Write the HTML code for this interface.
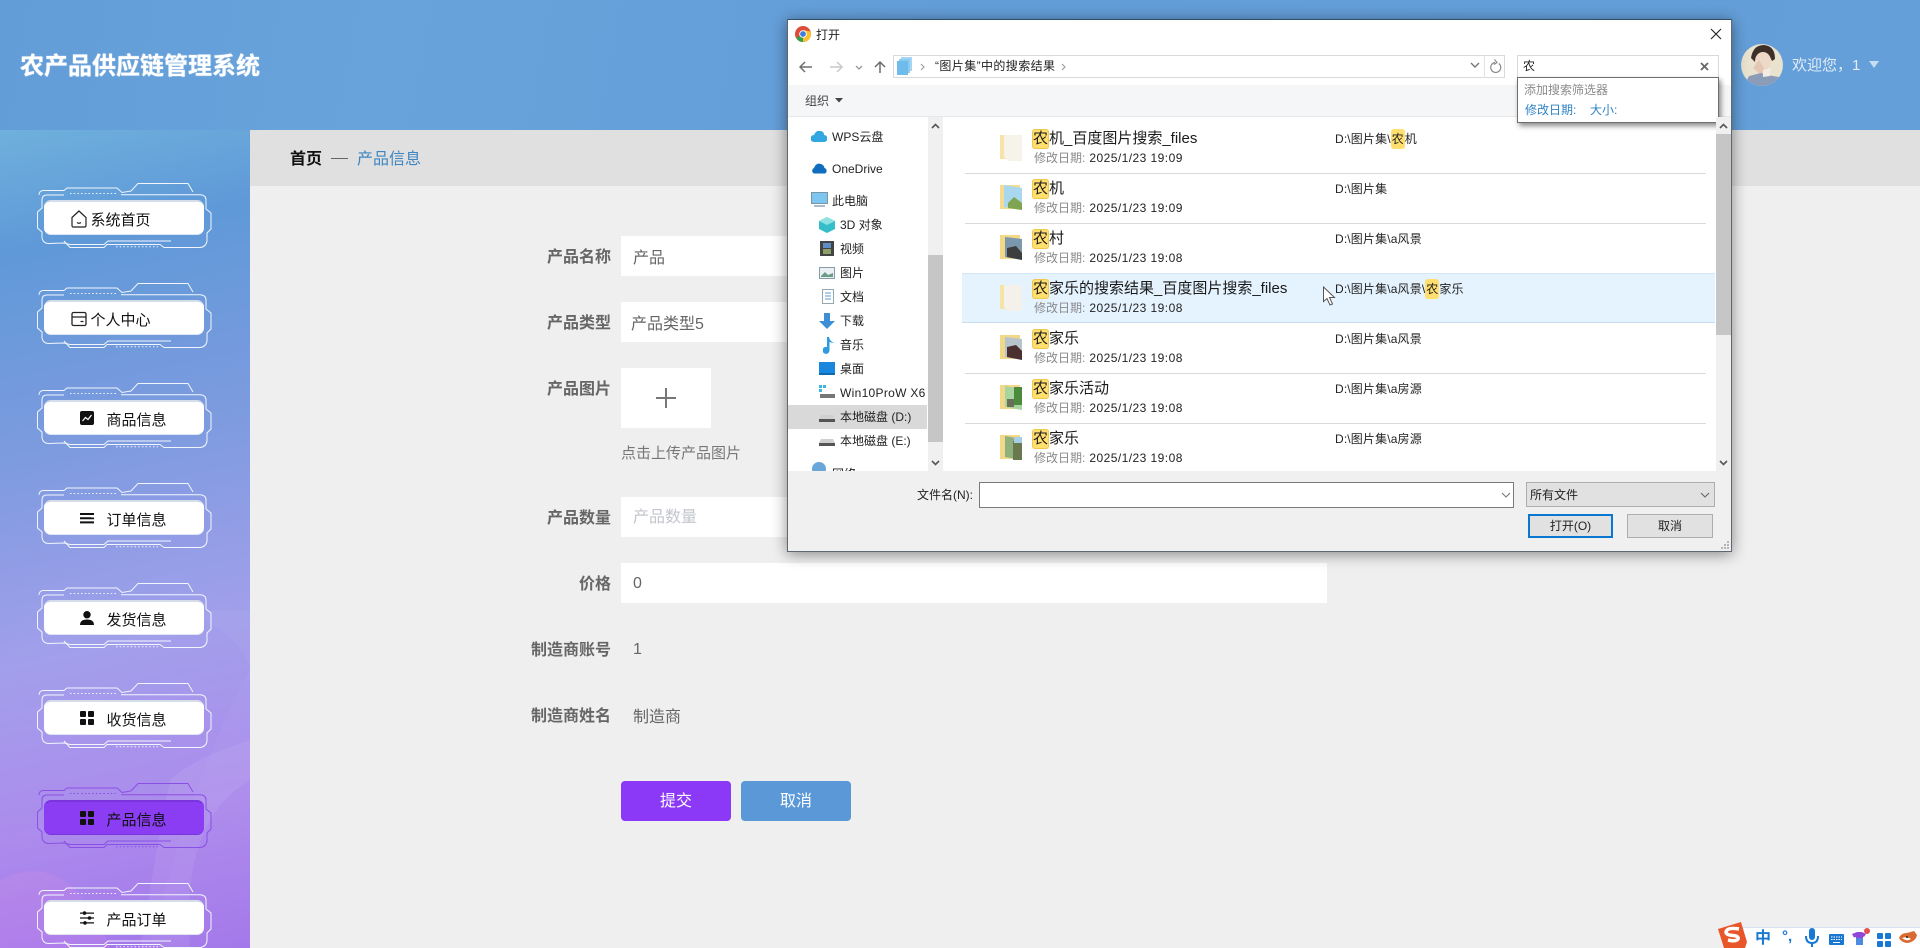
<!DOCTYPE html>
<html lang="zh"><head><meta charset="utf-8"><title>农产品供应链管理系统</title>
<style>
html{margin:0;padding:0;width:1920px;height:948px;overflow:hidden}
body{margin:0;padding:0;position:relative;width:1920px;height:948px;overflow:hidden;background:#efefef;font-family:"Liberation Sans","Noto Sans CJK SC",sans-serif;color:#333}
div,span.a,svg.a{position:absolute}
.t{position:absolute;white-space:nowrap;line-height:20px;height:20px}
.side{left:0;top:130px;width:250px;height:818px;overflow:hidden;background:linear-gradient(168deg,#6fb0dc 0,#5f99d8 14%,#7d9bdf 38%,#a29feb 62%,#ac8bec 82%,#a274ea 100%)}
.btn{left:44px;width:160px;height:35px;background:#fff;border-radius:7px;box-sizing:border-box;border-top:2px solid #d5dcea;border-bottom:1px solid #dfe6f3}
.btn.on{background:#8a3df2;border-color:#7b33dc}
.m{font-size:15px;color:#111;margin-top:2px}
.lb{font-size:16px;font-weight:bold;color:#666;text-align:right;width:120px;left:491px;margin-top:2px}
.in{left:621px;width:706px;height:40px;background:#fff}
.v{font-size:16px;color:#666;margin-top:2px}
.dlg{left:787px;top:19px;width:945px;height:533px;background:#fff;box-sizing:border-box;border:1px solid #5f6870;border-top-color:#2d5068;box-shadow:0 2px 14px rgba(0,0,0,.45)}
.d{font-size:12px;color:#222}
.n{font-size:15px;color:#1a1a1a;left:1032px;margin-top:1px}
.h{display:inline-block;width:17px;text-align:center;background:#ffdf6d;border-radius:3px;box-shadow:inset 0 0 0 1px #f0c850}
.hs{display:inline-block;width:14px;text-align:center;background:#ffdf6d;border-radius:3px}
.dt{font-size:12px;left:1034px;color:#8a8a8a}
.dt b{font-weight:normal;color:#222;letter-spacing:.45px;margin-left:4px}
.p{font-size:12px;left:1335px;color:#222;letter-spacing:.15px}
.sep{left:965px;width:741px;height:1px;background:#d9d9d9}
.f{left:1000px;width:22px;height:28px}
</style></head><body>
<svg width="0" height="0" style="position:absolute">
<defs>
<symbol id="fr" viewBox="0 0 210 100">
<g fill="none" stroke="currentColor" stroke-width="1">
<path d="M19 25Q19 21 23 20.5L44 20.5L47 18L97 18L102 22.5L111 21L118 13.5L168 13.5L173 22"/>
<path d="M44 25L27 25Q22 25 22 30L22 38L17.5 42L17.5 58L22 62L22 68Q23 73 28 73.5L44 73L50 74.5L84 74.5L88 71L151 71"/>
<path d="M44 71L50 77.5L84 77.5L87 74.5L140 74.5L144 77.5L180 77.5Q186 77 187 71L187 63L191 59L191 43L186 39L186 30Q186 25 180 24.7L101 24.7"/>
<path d="M50 23.5L96 23.5" stroke-dasharray="1.5 2.2"/>
<path d="M96 76.7L138 76.7" stroke-dasharray="1.5 2.2"/>
</g>
</symbol>
<symbol id="grid" viewBox="0 0 14 14"><rect width="6" height="6" rx="1"/><rect x="8" width="6" height="6" rx="1"/><rect y="8" width="6" height="6" rx="1"/><rect x="8" y="8" width="6" height="6" rx="1"/></symbol>
</defs></svg>

<!-- header -->
<div style="left:0;top:0;width:1920px;height:130px;background:linear-gradient(100deg,#639dd8,#68a3db 20%,#639dd8 50%,#649fd9)"></div>
<div class="t" style="left:20px;top:55px;height:24px;line-height:24px;font-size:24px;font-weight:bold;color:#fff;text-shadow:0 0 1px #fff">农产品供应链管理系统</div>
<svg class="a" style="left:1741px;top:44px" width="42" height="42" viewBox="0 0 42 42"><defs><clipPath id="av"><circle cx="21" cy="21" r="21"/></clipPath></defs><g clip-path="url(#av)"><rect width="42" height="42" fill="#e9e2cf"/><path d="M10 14Q12 1 23 1Q34 2 34 15L31 17Q27 8 20 9Q15 10 14 18Z" fill="#3d3029"/><ellipse cx="22" cy="17" rx="8" ry="9" fill="#eed9c8"/><path d="M12 24L18 16L24 26L20 31Z" fill="#e3c7b2"/><path d="M3 42L8 32L20 29L26 31L38 33L40 42Z" fill="#8b9cb8"/><path d="M22 26L30 24L29 32L22 33Z" fill="#f3ece2"/></g></svg>
<div class="t" style="left:1792px;top:56px;font-size:15px;color:#e1ecf7">欢迎您，1</div>
<svg class="a" style="left:1869px;top:61px" width="10" height="8"><path d="M0 0H10L5 7Z" fill="#c9ddf2"/></svg>

<!-- sidebar -->
<div class="side">
<svg class="a" style="left:0;top:480px" width="250" height="338" viewBox="0 0 250 338"><path d="M250 60Q190 170 150 338H250Z" fill="#fff" opacity=".03"/><path d="M0 270Q70 235 110 338H0Z" fill="#e58fe8" opacity=".18"/><path d="M140 338Q160 220 170 170Q190 150 250 130V170Q180 210 190 338Z" fill="#fff" opacity=".07"/><path d="M180 0Q240 20 250 60V0Z" fill="#fff" opacity=".04"/></svg>
</div>
<svg class="a" style="left:20px;top:170px;color:#f1f6fd" width="210" height="100"><use href="#fr"/></svg>
<svg class="a" style="left:20px;top:270px;color:#f1f6fd" width="210" height="100"><use href="#fr"/></svg>
<svg class="a" style="left:20px;top:370px;color:#f1f6fd" width="210" height="100"><use href="#fr"/></svg>
<svg class="a" style="left:20px;top:470px;color:#f1f6fd" width="210" height="100"><use href="#fr"/></svg>
<svg class="a" style="left:20px;top:570px;color:#f1f6fd" width="210" height="100"><use href="#fr"/></svg>
<svg class="a" style="left:20px;top:670px;color:#f1f6fd" width="210" height="100"><use href="#fr"/></svg>
<svg class="a" style="left:20px;top:770px;color:#8a4fe4" width="210" height="100"><use href="#fr"/></svg>
<svg class="a" style="left:20px;top:870px;color:#f1f6fd" width="210" height="78"><use href="#fr" width="210" height="100"/></svg>
<div class="btn" style="top:200px"></div>
<div class="btn" style="top:300px"></div>
<div class="btn" style="top:400px"></div>
<div class="btn" style="top:500px"></div>
<div class="btn" style="top:600px"></div>
<div class="btn" style="top:700px"></div>
<div class="btn on" style="top:800px"></div>
<div class="btn" style="top:900px"></div>
<svg class="a" style="left:71px;top:210px" width="16" height="18" viewBox="0 0 16 18" fill="none" stroke="#222" stroke-width="1.2"><path d="M1 7.5L8 1L15 7.5V15.5Q15 17 13.5 17H2.5Q1 17 1 15.5Z"/><path d="M6 12.5Q8 14 10 12.5"/></svg>
<div class="t m" style="left:90.5px;top:209px">系统首页</div>
<svg class="a" style="left:71px;top:311px" width="16" height="16" viewBox="0 0 16 16" fill="none" stroke="#222" stroke-width="1.3"><rect x="1" y="1.5" width="14" height="13" rx="1.5"/><path d="M1 6H15M9.5 10.5H12.5"/></svg>
<div class="t m" style="left:90.5px;top:309px">个人中心</div>
<svg class="a" style="left:80px;top:411px" width="14" height="14" viewBox="0 0 14 14"><rect width="14" height="14" rx="2" fill="#111"/><path d="M2.5 10L5.5 6.5L8 8.5L11.5 4" fill="none" stroke="#fff" stroke-width="1.2"/></svg>
<div class="t m" style="left:106.5px;top:409px">商品信息</div>
<svg class="a" style="left:80px;top:511px" width="14" height="14" viewBox="0 0 14 14"><path d="M0 2H14V4H0ZM0 6.2H14V8.2H0ZM0 10.4H14V12.4H0Z" fill="#111"/><path d="M11 5H14V6.5H11Z" fill="#fff"/></svg>
<div class="t m" style="left:106.5px;top:509px">订单信息</div>
<svg class="a" style="left:80px;top:611px" width="14" height="14" viewBox="0 0 14 14" fill="#111"><circle cx="7" cy="3.7" r="3.7"/><path d="M0 14Q0 8.5 7 8.5Q14 8.5 14 14Z"/></svg>
<div class="t m" style="left:106.5px;top:609px">发货信息</div>
<svg class="a" style="left:80px;top:711px" width="14" height="14" fill="#111"><use href="#grid"/></svg>
<div class="t m" style="left:106.5px;top:709px">收货信息</div>
<svg class="a" style="left:80px;top:811px" width="14" height="14" fill="#111"><use href="#grid"/></svg>
<div class="t m" style="left:106.5px;top:809px">产品信息</div>
<svg class="a" style="left:80px;top:911px" width="14" height="14" viewBox="0 0 14 14" fill="#111"><path d="M0 1.5H14V2.7H0ZM0 6.4H14V7.6H0ZM0 11.3H14V12.5H0Z"/><circle cx="4.5" cy="2.1" r="1.8"/><circle cx="9.5" cy="7" r="1.8"/><circle cx="5" cy="11.9" r="1.8"/></svg>
<div class="t m" style="left:106.5px;top:909px">产品订单</div>

<!-- breadcrumb -->
<div style="left:250px;top:130px;width:1670px;height:56px;background:#e0e0e0"></div>
<div class="t" style="left:290px;top:150px;font-size:16px;font-weight:bold;color:#111">首页</div>
<div style="left:331px;top:158px;width:17px;height:1px;background:#666"></div>
<div class="t" style="left:357px;top:150px;font-size:16px;color:#3e86c2">产品信息</div>

<!-- form -->
<div class="t lb" style="top:246px">产品名称</div><div class="in" style="top:236px"></div>
<div class="t v" style="left:633px;top:247px">产品</div>
<div class="t lb" style="top:312px">产品类型</div><div class="in" style="top:302px"></div>
<div class="t v" style="left:631px;top:313px">产品类型5</div>
<div class="t lb" style="top:378px">产品图片</div>
<div style="left:621px;top:368px;width:90px;height:60px;background:#fff"></div>
<div style="left:656px;top:397px;width:20px;height:2px;background:#777"></div>
<div style="left:665px;top:388px;width:2px;height:20px;background:#777"></div>
<div class="t" style="left:621px;top:444px;font-size:15px;color:#777">点击上传产品图片</div>
<div class="t lb" style="top:507px">产品数量</div><div class="in" style="top:497px"></div>
<div class="t" style="left:633px;top:508px;font-size:16px;color:#c3c6cd">产品数量</div>
<div class="t lb" style="top:573px">价格</div><div class="in" style="top:563px"></div>
<div class="t v" style="left:633px;top:572px">0</div>
<div class="t lb" style="top:639px">制造商账号</div>
<div class="t v" style="left:633px;top:638px">1</div>
<div class="t lb" style="top:705px">制造商姓名</div>
<div class="t v" style="left:633px;top:706px">制造商</div>
<div class="t" style="left:621px;top:781px;width:110px;height:40px;line-height:42px;text-align:center;background:#8b39f7;border-radius:4px;color:#fff;font-size:16px">提交</div>
<div class="t" style="left:741px;top:781px;width:110px;height:40px;line-height:42px;text-align:center;background:#5a98d8;border-radius:4px;color:#fff;font-size:16px">取消</div>

<!-- dialog -->
<div class="dlg"></div>
<svg class="a" style="left:795px;top:26px" width="16" height="16" viewBox="0 0 16 16"><circle cx="8" cy="8" r="8" fill="#dd4b39"/><path d="M8 8L1.1 12A8 8 0 0 0 8 16L11.5 8Z" fill="#2fa04c"/><path d="M8 8L8 16A8 8 0 0 0 15.6 5.5L8 4Z" fill="#fbc02d"/><circle cx="8" cy="8" r="3.8" fill="#fff"/><circle cx="8" cy="8" r="2.9" fill="#3f7fdc"/></svg>
<div class="t d" style="left:816px;top:25px">打开</div>
<svg class="a" style="left:1710px;top:28px" width="12" height="12" viewBox="0 0 12 12"><path d="M1 1L11 11M11 1L1 11" stroke="#222" stroke-width="1.1" fill="none"/></svg>
<!-- toolbar -->
<svg class="a" style="left:799px;top:60px" width="95" height="14" viewBox="0 0 95 14" fill="none"><path d="M1 7H13M6 2L1 7L6 12" stroke="#6d6d6d" stroke-width="1.5"/><path d="M31 7H43M38 2L43 7L38 12" stroke="#c9c9c9" stroke-width="1.5"/><path d="M57 6L60 9L63 6" stroke="#999" stroke-width="1.3"/><path d="M81 13V2M76 7L81 2L86 7" stroke="#6d6d6d" stroke-width="1.5"/></svg>
<div style="left:893px;top:55px;width:612px;height:23px;box-sizing:border-box;border:1px solid #d9d9d9;background:#fff"></div>
<div style="left:1484px;top:55px;width:1px;height:23px;background:#e3e3e3"></div>
<svg class="a" style="left:897px;top:57px" width="15" height="18" viewBox="0 0 15 18"><rect x="4" y="0" width="11" height="14" fill="#a6d6f5"/><rect x="2" y="2" width="11" height="14" fill="#8ccaf0"/><rect x="0" y="4" width="11" height="14" fill="#6ebbec"/></svg>
<svg class="a" style="left:920px;top:62px" width="150" height="10" viewBox="0 0 150 10" fill="none" stroke="#999" stroke-width="1.1"><path d="M1 2L4 5L1 8M142 2L145 5L142 8"/></svg>
<div class="t d" style="left:935px;top:56px;letter-spacing:.4px">“图片集”中的搜索结果</div>
<svg class="a" style="left:1470px;top:62px" width="10" height="7"><path d="M1 1L5 5L9 1" fill="none" stroke="#777" stroke-width="1.4"/></svg>
<svg class="a" style="left:1489px;top:59px" width="13" height="15" viewBox="0 0 13 15" fill="none" stroke="#8a8a8a" stroke-width="1.2"><path d="M9.8 4.500A5 5 0 1 1 6 3.500M5.500 .5L8 3.500L5 5.500"/></svg>
<div style="left:1517px;top:55px;width:202px;height:23px;box-sizing:border-box;border:1px solid #d9d9d9;background:#fff"></div>
<div class="t d" style="left:1523px;top:56px">农</div>
<svg class="a" style="left:1700px;top:62px" width="9" height="9" viewBox="0 0 9 9"><path d="M1 1L8 8M8 1L1 8" stroke="#666" stroke-width="1.8"/></svg>
<div style="left:788px;top:85px;width:943px;height:32px;background:#f5f6f7"></div>
<div class="t d" style="left:805px;top:91px;color:#444">组织</div>
<svg class="a" style="left:835px;top:98px" width="8" height="5"><path d="M0 0H8L4 4.5Z" fill="#444"/></svg>
<div style="left:788px;top:116px;width:943px;height:1px;background:#e8e8e8"></div>

<!-- search dropdown -->
<div style="left:1517px;top:77px;width:202px;height:46px;box-sizing:border-box;border:1px solid #6e6e6e;background:#fff;box-shadow:2px 3px 5px rgba(0,0,0,.45)"></div>
<div class="t d" style="left:1524px;top:80px;color:#8a8a8a">添加搜索筛选器</div>
<div class="t d" style="left:1525px;top:100px;color:#2f83c5">修改日期:</div>
<div class="t d" style="left:1590px;top:100px;color:#2f83c5">大小:</div>

<!-- nav pane -->
<div style="left:788px;top:117px;width:155px;height:354px;background:#fff;overflow:hidden">
 <div style="left:0;top:288px;width:139px;height:24px;background:#d9d9d9"></div>
 <svg class="a" style="left:23px;top:12px" width="16" height="14" viewBox="0 0 16 14"><path d="M3 13A3.5 3.5 0 0 1 3 6Q5 1 9 2Q13 2 13 6A3.5 3.5 0 0 1 13 13Z" fill="#33a7e0"/></svg>
 <svg class="a" style="left:23px;top:45px" width="17" height="12" viewBox="0 0 17 12"><path d="M3 11.5A3 3 0 0 1 3 6Q5 .5 10 2Q13 3 13.500 6A3 3 0 0 1 14 11.500Z" fill="#0f6cbf"/></svg>
 <svg class="a" style="left:23px;top:75px" width="17" height="16" viewBox="0 0 17 16"><rect x=".5" y=".5" width="16" height="11" fill="#7dc6f0" stroke="#7b94a8"/><path d="M3 13H14V15H3Z" fill="#aebcc8"/></svg>
 <svg class="a" style="left:31px;top:100px" width="16" height="16" viewBox="0 0 16 16"><path d="M8 0L16 4V12L8 16L0 12V4Z" fill="#35bdc9"/><path d="M8 0L16 4L8 8L0 4Z" fill="#8fe2e2"/></svg>
 <svg class="a" style="left:32px;top:124px" width="14" height="15" viewBox="0 0 14 15"><rect width="14" height="15" fill="#444"/><rect x="3" y="2" width="8" height="5" fill="#5e8fc4"/><rect x="3" y="8" width="8" height="5" fill="#8da06a"/></svg>
 <svg class="a" style="left:31px;top:150px" width="16" height="12" viewBox="0 0 16 12"><rect x=".5" y=".5" width="15" height="11" fill="#e9eff3" stroke="#8a9ba8"/><path d="M2 9L6 5L9 8L14 6V10H2Z" fill="#6a9c86"/></svg>
 <svg class="a" style="left:34px;top:172px" width="12" height="15" viewBox="0 0 12 15"><rect x=".5" y=".5" width="11" height="14" fill="#fff" stroke="#9aa6ae"/><path d="M3 4H9M3 7H9M3 10H9" stroke="#5b9bd0"/></svg>
 <svg class="a" style="left:31px;top:196px" width="16" height="16" viewBox="0 0 16 16"><path d="M5 0H11V8H16L8 16L0 8H5Z" fill="#3f8fd6"/></svg>
 <svg class="a" style="left:35px;top:219px" width="12" height="18" viewBox="0 0 12 18"><path d="M4 1H6Q7 6 12 7Q9 7 6.500 6V14A3.500 3.500 0 1 1 4 11Z" fill="#2f9be0"/></svg>
 <div style="left:31px;top:245px;width:16px;height:11px;background:#1987dd;border-bottom:2px solid #0f6ab0"></div>
 <svg class="a" style="left:31px;top:268px" width="16" height="14" viewBox="0 0 16 14"><rect x="0" y="0" width="3" height="3" fill="#3fb6e0"/><rect x="4" y="0" width="3" height="3" fill="#3fb6e0"/><rect x="0" y="4" width="3" height="3" fill="#3fb6e0"/><path d="M1 9H16V13H1Z" fill="#777"/></svg>
 <svg class="a" style="left:31px;top:296px" width="16" height="10" viewBox="0 0 16 10"><path d="M2 2H14L16 6V9H0V6Z" fill="#d0d0d0"/><rect y="6" width="16" height="3" fill="#555"/></svg>
 <svg class="a" style="left:31px;top:320px" width="16" height="10" viewBox="0 0 16 10"><path d="M2 2H14L16 6V9H0V6Z" fill="#d0d0d0"/><rect y="6" width="16" height="3" fill="#555"/></svg>
 <svg class="a" style="left:24px;top:345px" width="14" height="14"><circle cx="7" cy="7" r="7" fill="#6aa7d8"/></svg>
 <div class="t d" style="left:44px;top:347px">网络</div>
 <div class="t d" style="left:44px;top:10px">WPS云盘</div>
 <div class="t d" style="left:44px;top:42px">OneDrive</div>
 <div class="t d" style="left:44px;top:74px">此电脑</div>
 <div class="t d" style="left:52px;top:98px">3D 对象</div>
 <div class="t d" style="left:52px;top:122px">视频</div>
 <div class="t d" style="left:52px;top:146px">图片</div>
 <div class="t d" style="left:52px;top:170px">文档</div>
 <div class="t d" style="left:52px;top:194px">下载</div>
 <div class="t d" style="left:52px;top:218px">音乐</div>
 <div class="t d" style="left:52px;top:242px">桌面</div>
 <div style="left:52px;top:266px;width:87px;height:20px;overflow:hidden"><div class="t d" style="left:0;top:0;letter-spacing:.3px">Win10ProW X6</div></div>
 <div class="t d" style="left:52px;top:290px">本地磁盘 (D:)</div>
 <div class="t d" style="left:52px;top:314px">本地磁盘 (E:)</div>
 <div style="left:140px;top:0;width:15px;height:354px;background:#f0f0f0"></div>
 <div style="left:140px;top:138px;width:15px;height:187px;background:#c6c6c6"></div>
 <svg class="a" style="left:143px;top:6px" width="9" height="6"><path d="M1 5L4.500 1.500L8 5" fill="none" stroke="#555" stroke-width="1.6"/></svg>
 <svg class="a" style="left:143px;top:343px" width="9" height="6"><path d="M1 1L4.500 4.500L8 1" fill="none" stroke="#555" stroke-width="1.6"/></svg>
</div>

<!-- file list -->
<div style="left:962px;top:273px;width:753px;height:50px;background:#e5f3ff;border-top:1px solid #d5e6f5;border-bottom:1px solid #c7dcee;box-sizing:border-box"></div>
<div class="sep" style="top:173px"></div><div class="sep" style="top:223px"></div><div class="sep" style="top:373px"></div><div class="sep" style="top:423px"></div>

<svg class="a f" style="top:133px" viewBox="0 0 22 28"><path d="M0 2H20V26H0Z" fill="#f7e3a6"/><path d="M4 2H22V28H8L4 24Z" fill="#f6f3ea"/></svg>
<svg class="a f" style="top:183px" viewBox="0 0 22 28"><path d="M0 2H20V26H0Z" fill="#f5dc90"/><path d="M4 2L22 5V27L4 24Z" fill="#a9d7ee"/><path d="M8 20L14 14L22 20V27L8 25Z" fill="#7fa552"/></svg>
<svg class="a f" style="top:233px" viewBox="0 0 22 28"><path d="M0 2H20V26H0Z" fill="#f3d888"/><path d="M5 4L22 6V27L5 24Z" fill="#7c98ad"/><path d="M7 15L16 13L22 20V27L7 24Z" fill="#3d3f3e"/></svg>
<svg class="a f" style="top:283px" viewBox="0 0 22 28"><path d="M0 2H20V26H0Z" fill="#f7e3a6"/><path d="M4 2H22V28H8L4 24Z" fill="#f4f1ea"/></svg>
<svg class="a f" style="top:333px" viewBox="0 0 22 28"><path d="M0 2H20V26H0Z" fill="#f3d888"/><path d="M5 4L22 6V27L5 24Z" fill="#b8c4cc"/><path d="M7 14L16 12L22 18V27L7 24Z" fill="#4a3030"/></svg>
<svg class="a f" style="top:383px" viewBox="0 0 22 28"><path d="M0 2H20V26H0Z" fill="#f3d888"/><path d="M5 3L22 6V27L5 24Z" fill="#a8d4a0"/><path d="M14 4H22V22H14Z" fill="#4c8a3c"/><path d="M7 16H14V24H7Z" fill="#6a6f5a"/></svg>
<svg class="a f" style="top:433px" viewBox="0 0 22 28"><path d="M0 2H20V26H0Z" fill="#f3d888"/><path d="M5 3L22 6V27L5 24Z" fill="#8eb07c"/><path d="M13 8H22V27H13Z" fill="#69784f"/><path d="M14 4H22V10H14Z" fill="#a6cfe6"/></svg>

<div class="t n" style="top:128px"><span class="h">农</span>机_百度图片搜索_files</div>
<div class="t dt" style="top:148px">修改日期:<b>2025/1/23 19:09</b></div>
<div class="t n" style="top:178px"><span class="h">农</span>机</div>
<div class="t dt" style="top:198px">修改日期:<b>2025/1/23 19:09</b></div>
<div class="t n" style="top:228px"><span class="h">农</span>村</div>
<div class="t dt" style="top:248px">修改日期:<b>2025/1/23 19:08</b></div>
<div class="t n" style="top:278px"><span class="h">农</span>家乐的搜索结果_百度图片搜索_files</div>
<div class="t dt" style="top:298px">修改日期:<b>2025/1/23 19:08</b></div>
<div class="t n" style="top:328px"><span class="h">农</span>家乐</div>
<div class="t dt" style="top:348px">修改日期:<b>2025/1/23 19:08</b></div>
<div class="t n" style="top:378px"><span class="h">农</span>家乐活动</div>
<div class="t dt" style="top:398px">修改日期:<b>2025/1/23 19:08</b></div>
<div class="t n" style="top:428px"><span class="h">农</span>家乐</div>
<div class="t dt" style="top:448px">修改日期:<b>2025/1/23 19:08</b></div>

<div class="t p" style="top:129px">D:\图片集\<span class="hs">农</span>机</div>
<div class="t p" style="top:179px">D:\图片集</div>
<div class="t p" style="top:229px">D:\图片集\a风景</div>
<div class="t p" style="top:279px">D:\图片集\a风景\<span class="hs">农</span>家乐</div>
<div class="t p" style="top:329px">D:\图片集\a风景</div>
<div class="t p" style="top:379px">D:\图片集\a房源</div>
<div class="t p" style="top:429px">D:\图片集\a房源</div>

<!-- list scrollbar -->
<div style="left:1716px;top:117px;width:15px;height:354px;background:#f0f0f0"></div>
<div style="left:1716px;top:134px;width:15px;height:201px;background:#c6c6c6"></div>
<svg class="a" style="left:1719px;top:123px" width="9" height="6"><path d="M1 5L4.500 1.500L8 5" fill="none" stroke="#555" stroke-width="1.6"/></svg>
<svg class="a" style="left:1719px;top:460px" width="9" height="6"><path d="M1 1L4.500 4.500L8 1" fill="none" stroke="#555" stroke-width="1.6"/></svg>

<!-- cursor -->
<svg class="a" style="left:1322px;top:286px" width="14" height="20" viewBox="0 0 14 20"><path d="M1.500 1V15.500L5 12.500L8 19L10.500 18L7.500 11.500L12.500 11.500Z" fill="#fff" stroke="#555" stroke-width="1"/></svg>

<!-- footer -->
<div style="left:788px;top:471px;width:943px;height:80px;background:#f0f0f0"></div>
<div class="t d" style="left:917px;top:485px">文件名(N):</div>
<div style="left:979px;top:482px;width:535px;height:26px;box-sizing:border-box;border:1px solid #7a7a7a;background:#fff"></div>
<svg class="a" style="left:1501px;top:492px" width="10" height="6"><path d="M1 1L5 5L9 1" fill="none" stroke="#777" stroke-width="1.1"/></svg>
<div style="left:1526px;top:482px;width:189px;height:25px;box-sizing:border-box;border:1px solid #adadad;background:#e1e1e1"></div>
<div class="t d" style="left:1530px;top:485px">所有文件</div>
<svg class="a" style="left:1700px;top:492px" width="10" height="6"><path d="M1 1L5 5L9 1" fill="none" stroke="#666" stroke-width="1.1"/></svg>
<div class="t d" style="left:1528px;top:514px;width:85px;height:24px;line-height:20px;box-sizing:border-box;border:2px solid #0a78d0;background:#e1e1e1;text-align:center">打开(O)</div>
<div class="t d" style="left:1627px;top:514px;width:86px;height:24px;line-height:22px;box-sizing:border-box;border:1px solid #adadad;background:#e1e1e1;text-align:center">取消</div>
<svg class="a" style="left:1720px;top:540px" width="10" height="10" fill="#b5b5b5"><rect x="7" y="1" width="2" height="2"/><rect x="4" y="4" width="2" height="2"/><rect x="7" y="4" width="2" height="2"/><rect x="1" y="7" width="2" height="2"/><rect x="4" y="7" width="2" height="2"/><rect x="7" y="7" width="2" height="2"/></svg>

<!-- IME bar -->
<div style="left:1738px;top:927px;width:182px;height:21px;background:#fff;border-top:1px solid #d6e2f4;box-sizing:border-box"></div>
<svg class="a" style="left:1717px;top:922px" width="30" height="26" viewBox="0 0 30 26"><path d="M1 7L24 0L30 20L28 26H7Z" fill="#e9562a"/><path d="M22 7Q10 5 9 10Q9 13 16 13.500Q22 14 21 17Q19 20 11 18" fill="none" stroke="#fff" stroke-width="3.5"/></svg>
<div class="t" style="left:1755px;top:929px;font-size:16px;font-weight:bold;color:#1878d2">中</div>
<div class="t" style="left:1782px;top:927px;font-size:15px;font-weight:bold;color:#1878d2">°,</div>
<svg class="a" style="left:1805px;top:928px" width="14" height="20" viewBox="0 0 14 20"><rect x="4" y="0" width="6" height="12" rx="3" fill="#1878d2"/><path d="M1 8Q1 15 7 15Q13 15 13 8M7 15V19" fill="none" stroke="#1878d2" stroke-width="2"/></svg>
<svg class="a" style="left:1829px;top:934px" width="15" height="11" viewBox="0 0 15 11"><rect width="15" height="11" rx="1" fill="#1878d2"/><path d="M2 3H13M2 5.500H13" stroke="#fff" stroke-dasharray="1.500 1"/><path d="M4 8.500H11" stroke="#fff"/></svg>
<svg class="a" style="left:1852px;top:928px" width="18" height="18" viewBox="0 0 18 18"><path d="M0 6L5 4H10L14 6L12 9L11 8.500V17H4V9L2 9.500Z" fill="#9048d8"/><path d="M4 10H11V17H4Z" fill="#4d8ae0"/><circle cx="15" cy="3" r="3" fill="#e84d4d"/></svg>
<svg class="a" style="left:1877px;top:933px" width="14" height="14" fill="#1878d2"><use href="#grid"/></svg>
<svg class="a" style="left:1899px;top:931px" width="18" height="14" viewBox="0 0 18 14"><path d="M0 7Q2 2 8 2L15 0L18 4Q17 10 9 12Q3 12 0 7Z" fill="#d96a30"/><path d="M3 7Q8 5 12 8Q8 11 3 7Z" fill="#fff"/><circle cx="8" cy="6" r="1" fill="#222"/></svg>
</body></html>
